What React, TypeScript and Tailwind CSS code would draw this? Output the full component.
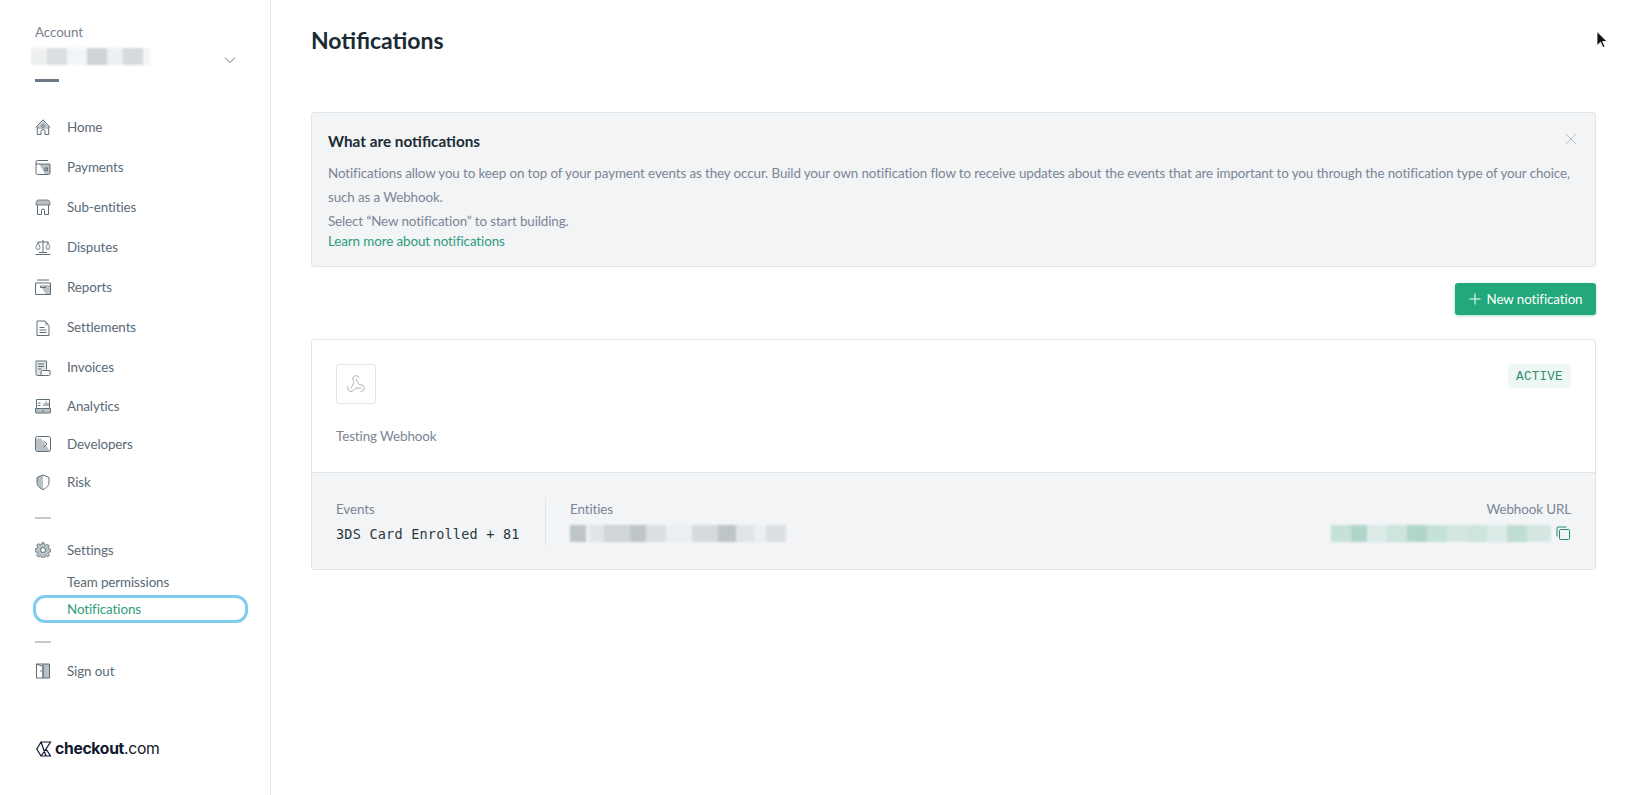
import React from "react";
import { Webhook } from "lucide-react";

const Shade = "#b9c1c6";
const Line = "#5c6e78";

const icons: Record<string, React.ReactNode> = {
  home: (
    <>
      <path d="M2.500 8 8 2l5.500 6v2h-11z" fill={Shade} />
      <path d="M.8 8.500 8 .8l7.200 7.700M2.300 7.500v8h3.700v-3a2 2 0 0 1 4 0v3h3.700v-8" fill="none" stroke={Line} />
      <circle cx="8" cy="7" r="1.300" fill="#fff" stroke={Line} />
    </>
  ),
  payments: (
    <>
      <path d="M4 5h11v10H10z" fill={Shade} />
      <path d="M15 5H1M1 3a1.500 1.500 0 0 1 1.500-1.500H13M1 3v11a1.500 1.500 0 0 0 1.500 1.500h11A1.500 1.500 0 0 0 15 14V5" fill="none" stroke={Line} />
      <rect x="10" y="9" width="2.500" height="2.500" fill="none" stroke={Line} />
    </>
  ),
  entities: (
    <>
      <path d="M1 3.500 2.500 1h11L15 3.500V6H1z" fill={Shade} stroke={Line} strokeWidth="0.800" />
      <path d="M2.500 6v9.500h4v-4a1.500 1.500 0 0 1 3 0v4h4V6" fill="none" stroke={Line} />
    </>
  ),
  disputes: (
    <>
      <path d="M8 1v12M.5 15.500h15M3 3h10M4 13.500h8" fill="none" stroke={Line} />
      <path d="M1 8.500 3 3l2 5.500a2 2 0 0 1-4 0zM11 8.500 13 3l2 5.500a2 2 0 0 1-4 0z" fill="none" stroke={Line} strokeWidth="0.800" />
      <path d="M11 8.500h4a2 2 0 0 1-4 0z" fill={Shade} />
    </>
  ),
  reports: (
    <>
      <path d="M5 6h10v9.500H11z" fill={Shade} />
      <path d="M2 1h12M.5 4h15v11.500H.5zM5.500 7v1.500h5V7" fill="none" stroke={Line} />
    </>
  ),
  settlements: (
    <>
      <path d="M10 1v4.500h4" fill={Shade} />
      <path d="M2 1h8l4 4.500v10H2zM4.500 7.500h5M4.500 10h7M4.500 12.500h7" fill="none" stroke={Line} />
    </>
  ),
  invoices: (
    <>
      <path d="M2 1.500h10V10H7.500a1.500 1.500 0 0 0-1.500 1.500v4H3.500A1.500 1.500 0 0 1 2 14z" fill="#dfe3e6" />
      <path d="M1 1h10.500v8.500M1 1v13a1.500 1.500 0 0 0 1.500 1.500h11a1.500 1.500 0 0 0 1.500-1.500v-3.500H7.500a1.500 1.500 0 0 0-1.500 1.500v3.500M3 4h6M3 6.500h6M3 9h3.500" fill="none" stroke={Line} />
    </>
  ),
  analytics: (
    <>
      <path d="M.5 10.500h15v4.500H.5z" fill={Shade} />
      <path d="M1.500 1.500h13V10.500h-13zM.5 10.500h15v3.500a1 1 0 0 1-1 1h-13a1 1 0 0 1-1-1zM3 5h2.500M3 7.500h2.500M9 8V5.500M11 8V3.500M13 8V5M7 13h2" fill="none" stroke={Line} />
    </>
  ),
  developers: (
    <>
      <path d="M1 2.500h5l9 12.500H3a2 2 0 0 1-2-2z" fill={Shade} />
      <rect x="0.500" y="0.500" width="15" height="15" rx="2" fill="none" stroke={Line} />
      <path d="m8.500 5 3.500 3-3.500 3" fill="none" stroke={Line} />
    </>
  ),
  risk: (
    <>
      <path d="M8 1 2 3.500V8c0 3.500 2.500 6.300 6 7.500z" fill={Shade} />
      <path d="M8 1l6 2.500V8c0 3.500-2.500 6.300-6 7.500C4.500 14.300 2 11.500 2 8V3.500z" fill="none" stroke={Line} />
    </>
  ),
  settings: (
    <>
      <path
        d="M6.800.7h2.400l.4 2 1.300.6 1.800-1.100 1.700 1.700-1.100 1.800.6 1.300 2 .4v2.400l-2 .4-.6 1.300 1.100 1.800-1.700 1.700-1.800-1.100-1.300.6-.4 2H6.800l-.4-2-1.300-.6-1.800 1.100-1.700-1.700 1.100-1.800-.6-1.300-2-.4V6.800l2-.4.6-1.300-1.100-1.800 1.700-1.700 1.800 1.100 1.300-.6z"
        fill={Shade}
        stroke={Line}
        strokeWidth="0.800"
      />
      <circle cx="8" cy="8" r="2.500" fill="#fff" stroke={Line} />
    </>
  ),
  signout: (
    <>
      <path d="M8 1h6.500v14H8z" fill={Shade} />
      <path d="M8 1h6.500v14H8M1.500 1H8v14H1.500zM1.500 1 8 3.500V15" fill="none" stroke={Line} />
      <circle cx="6" cy="8" r="0.800" fill={Line} />
    </>
  ),
};

const navTop = [
  { label: "Home", icon: "home", h: "h-[40px]" },
  { label: "Payments", icon: "payments", h: "h-[40px]" },
  { label: "Sub-entities", icon: "entities", h: "h-[40px]" },
  { label: "Disputes", icon: "disputes", h: "h-[40px]" },
  { label: "Reports", icon: "reports", h: "h-[40px]" },
  { label: "Settlements", icon: "settlements", h: "h-[41px]" },
  { label: "Invoices", icon: "invoices", h: "h-[39px]" },
  { label: "Analytics", icon: "analytics", h: "h-[38px]" },
  { label: "Developers", icon: "developers", h: "h-[38px]" },
  { label: "Risk", icon: "risk", h: "h-[38px]" },
];

const NavItem = ({ label, icon, h }: { label: string; icon: string; h: string }) => (
  <div className={`flex items-center ${h} pl-[35px] text-[13.400px] tracking-[-0.1px] text-[#5a6a76]`}>
    <svg width="16" height="16" viewBox="0 0 16 16" className="mr-[16px] shrink-0">
      {icons[icon]}
    </svg>
    {label}
  </div>
);

// redacted strings in the shot, just soft blocks
const Smudge = ({ blocks, color }: { blocks: [number, number][]; color: string }) => (
  <div className="flex h-[17px] blur-[1.2px]">
    {blocks.map(([w, o], i) => (
      <div key={i} className="h-full" style={{ width: w, backgroundColor: color, opacity: o }} />
    ))}
  </div>
);

const Sidebar = () => (
  <aside className="flex h-[795px] w-[271px] shrink-0 flex-col border-r border-[#e3e8ec]">
    <div className="pl-[35px] pt-[24px] text-[13.400px] leading-[17px] tracking-[-0.1px] text-[#77838f]">Account</div>
    <div className="flex h-[23px] items-center justify-between pl-[31px] pr-[34px] pt-[7px]">
      <Smudge
        color="#c3cacd"
        blocks={[[16, 0.3], [20, 0.6], [20, 0.2], [20, 0.8], [16, 0.3], [20, 0.7], [7, 0.2]]}
      />
      <svg width="12" height="8" viewBox="0 0 12 8" className="mt-[7px]">
        <path d="m1 1.500 5 5 5-5" fill="none" stroke="#6b7a85" strokeWidth="1" />
      </svg>
    </div>
    <div className="ml-[35px] mt-[15px] h-[3px] w-[24px] bg-[#6d7886]" />
    <nav className="mt-[25px] flex flex-col">
      {navTop.map((n) => (
        <NavItem key={n.label} {...n} />
      ))}
    </nav>
    <div className="ml-[35px] mt-[16px] h-[2px] w-[16px] bg-[#c3cbcf]" />
    <div className="mt-[11px]">
      <NavItem label="Settings" icon="settings" h="h-[40px]" />
    </div>
    <div className="flex h-[22px] items-center pl-[67px] pt-[2px] text-[13.400px] tracking-[-0.1px] text-[#5a6a76]">
      Team permissions
    </div>
    <div className="ml-[33px] mt-[3px] flex h-[28px] w-[215px] items-center rounded-[12px] border-[3px] border-[#7fcdee] pl-[31px] text-[13.400px] tracking-[-0.1px] text-[#2f9c7c]">
      Notifications
    </div>
    <div className="ml-[35px] mt-[18px] h-[2px] w-[16px] bg-[#c3cbcf]" />
    <div className="mt-[8px]">
      <NavItem label="Sign out" icon="signout" h="h-[40px]" />
    </div>
    <div className="ml-[36px] mt-[46px] flex items-center font-['Inter',sans-serif] text-[15.700px] leading-[24px] tracking-[-0.3px] text-[#10182e]">
      <svg width="16" height="16" viewBox="0 0 16 16" className="mr-[3px] shrink-0">
        <path d="M5 1h9.500L10 8l4.500 7H5L.8 8zM5 1l5 14M10 8 5 15" fill="none" stroke="#10182e" strokeWidth="1.200" />
      </svg>
      <span className="font-bold">checkout</span>
      <span className="font-normal">.com</span>
    </div>
  </aside>
);

const App = () => (
  <div className="relative flex h-[795px] w-[1636px] overflow-hidden bg-white font-['Lato','Noto_Sans',sans-serif]">
    <Sidebar />
    <main className="flex-1 pl-[40px] pr-[40px]">
      <h1 className="pt-[25px] text-[23px] font-bold leading-[30px] text-[#1b2b33]">Notifications</h1>

      <section className="relative mt-[57px] h-[155px] rounded-[3px] border border-[#e1e5e9] bg-[#f2f4f6] px-[16px] pt-[18px]">
        <h2 className="text-[15.300px] font-bold leading-[20px] text-[#1b2b33]">What are notifications</h2>
        <svg width="12" height="12" viewBox="0 0 12 12" className="absolute right-[18px] top-[20px]">
          <path d="m1 1 10 10M11 1 1 11" fill="none" stroke="#b5bcc4" strokeWidth="1" />
        </svg>
        <p className="mt-[10px] text-[13.400px] leading-[24px] tracking-[-0.11px] text-[#7b8595]">
          Notifications allow you to keep on top of your payment events as they occur. Build your own notification flow to receive updates about the events that are important to you through the notification type of your choice, such as a Webhook.
        </p>
        <p className="text-[13.400px] leading-[24px] tracking-[-0.11px] text-[#7b8595]">
          Select “New notification” to start building.
        </p>
        <a className="block text-[13.400px] leading-[16px] tracking-[-0.1px] text-[#2f9c7c]">Learn more about notifications</a>
      </section>

      <div className="mt-[16px] flex justify-end">
        <button className="flex h-[32px] w-[141px] items-center justify-center rounded-[3px] bg-[#22a87a] text-[13.400px] tracking-[-0.1px] text-white shadow-[0_1px_3px_rgba(34,168,122,0.4)]">
          <svg width="12" height="12" viewBox="0 0 12 12" className="mr-[6px]">
            <path d="M6 .5v11M.5 6h11" fill="none" stroke="#fff" strokeWidth="1" />
          </svg>
          New notification
        </button>
      </div>

      <section className="mt-[24px] overflow-hidden rounded-[3px] border border-[#e1e5e9]">
        <div className="h-[132px] px-[24px] pt-[24px]">
          <div className="flex items-start justify-between">
            <div className="flex h-[40px] w-[40px] items-center justify-center rounded-[3px] border border-[#e1e5e9]">
              <Webhook size={20} strokeWidth={1} color="#9aa4ad" />
            </div>
            <span className="flex h-[24px] w-[63px] items-center justify-center rounded-[3px] bg-[#eef7f4] pt-[2px] font-['Liberation_Mono',monospace] text-[12.500px] tracking-[0.3px] text-[#2a8f70]">
              ACTIVE
            </span>
          </div>
          <div className="mt-[22px] text-[13.400px] leading-[20px] tracking-[-0.1px] text-[#7b8595]">Testing Webhook</div>
        </div>
        <div className="flex h-[97px] items-start border-t border-[#e1e5e9] bg-[#f2f4f6] px-[24px] pt-[24px]">
          <div className="h-[48px] w-[210px] shrink-0 border-r border-[#e1e5e9]">
            <div className="text-[13.400px] leading-[24px] tracking-[-0.1px] text-[#7b8595]">Events</div>
            <div className="mt-[1px] font-['DejaVu_Sans_Mono',monospace] text-[13.500px] leading-[24px] tracking-[0.22px] text-[#2a3840]">
              3DS Card Enrolled + 81
            </div>
          </div>
          <div className="pl-[24px]">
            <div className="text-[13.400px] leading-[24px] tracking-[-0.1px] text-[#7b8595]">Entities</div>
            <div className="mt-[4px]">
              <Smudge
                color="#b8c0c4"
                blocks={[[16, 0.9], [4, 0.1], [14, 0.3], [26, 0.6], [16, 0.9], [20, 0.4], [26, 0.1], [26, 0.5], [18, 0.9], [18, 0.3], [12, 0.1], [20, 0.4]]}
              />
            </div>
          </div>
          <div className="ml-auto flex flex-col items-end">
            <div className="text-[13.400px] leading-[24px] tracking-[-0.1px] text-[#7b8595]">Webhook URL</div>
            <div className="mt-[4px] flex items-center">
              <Smudge
                color="#a9d3c6"
                blocks={[[20, 0.6], [16, 0.9], [20, 0.3], [20, 0.5], [20, 0.9], [20, 0.6], [20, 0.4], [20, 0.5], [20, 0.3], [20, 0.7], [24, 0.4]]}
              />
              <svg width="15" height="15" viewBox="0 0 15 15" className="ml-[5px]" fill="none" stroke="#1f8a6b" strokeWidth="1">
                <rect x="3.500" y="3.500" width="10" height="10" rx="1" />
                <path d="M1 10.500V2a1 1 0 0 1 1-1h8.500" />
              </svg>
            </div>
          </div>
        </div>
      </section>
    </main>
    <svg width="12" height="18" viewBox="0 0 12 18" className="absolute left-[1596px] top-[31px]">
      <path d="M1 .5v14l3.500-3.300L7 16.500l2-.9-2.400-5.100H11z" fill="#111" stroke="#fff" strokeWidth="0.800" />
    </svg>
  </div>
);

export default App;
